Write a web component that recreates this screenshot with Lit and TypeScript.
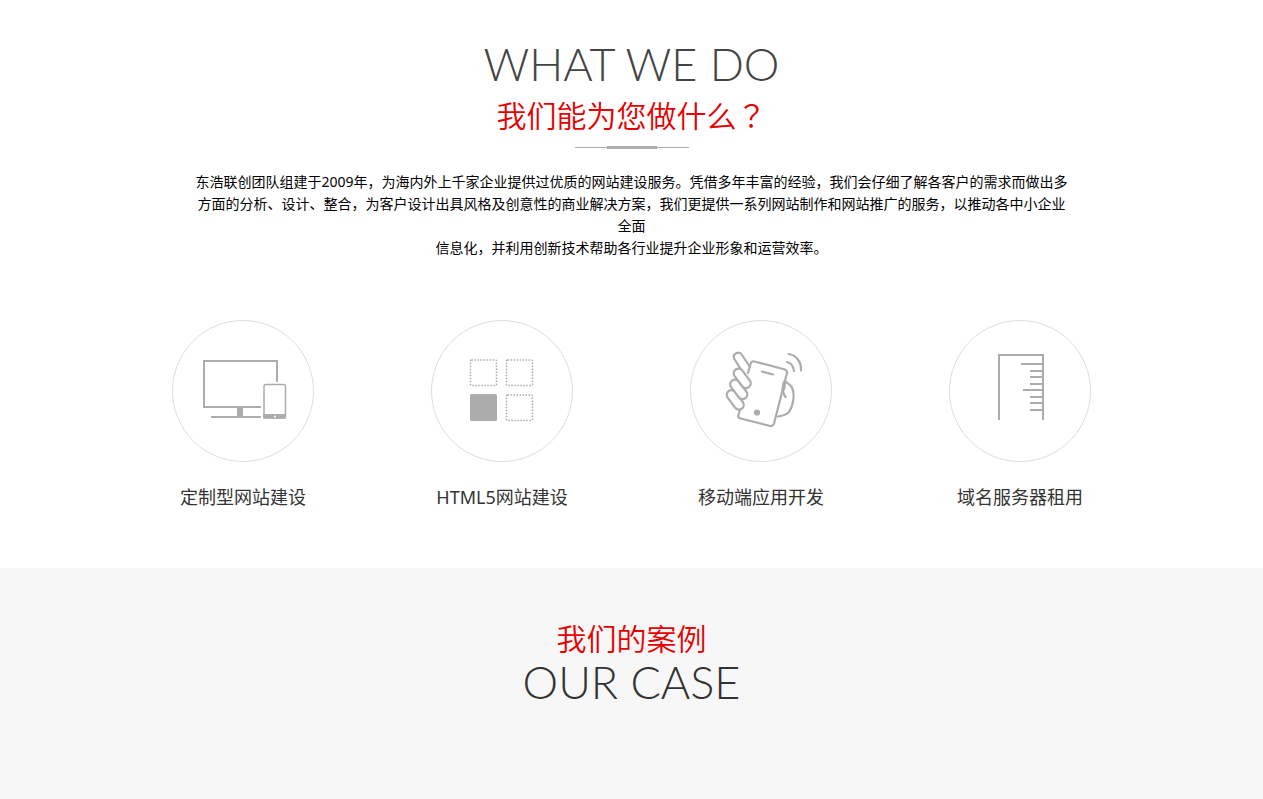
import { LitElement, html, css, svg } from "lit";
import { customElement } from "lit/decorators.js";

const screens = svg`
  <path d="M105 62V41H32V87H89M39 97H89" />
  <path d="M68 87V97" stroke-width="6" />
  <rect x="92" y="64.500" width="21.500" height="33.500" rx="2" stroke-width="1.500" />
  <path d="M92 95H113V97.500H92Z" fill="#acacac" />
  <circle cx="103" cy="96.500" r="1" fill="#fff" stroke="none" />`;

const blocks = svg`
  <g stroke-width="1.500" stroke-dasharray="1.500 1.500">
    <rect x="39.500" y="40" width="26" height="25.500" rx="1" />
    <rect x="75.500" y="40" width="26" height="25.500" rx="1" />
    <rect x="75.500" y="75" width="26" height="25.500" rx="1" />
  </g>
  <rect x="39" y="74" width="27" height="27" rx="1.500" fill="#acacac" stroke="none" />`;

const phone = svg`
  <g stroke-linecap="round" stroke-linejoin="round" stroke-width="2.200">
    <path d="M50.500 88L48.500 94.500Q47.500 97.500 50.500 98.500L80 106Q83 106.500 84 103.500L97 53Q97.500 50.500 95 49.500L64.500 41.500Q61.500 40.500 60.500 44L58 53" />
    <path d="M72 51.500L83 54.500" />
    <circle cx="67" cy="92.500" r="2" fill="#acacac" />
    <path d="M60 47L52 35C49 30.500 42 33.500 44.300 39L52 51" />
    <g fill="#fff">
      <rect x="-4.500" y="-4.500" width="22" height="9.500" rx="4.700" transform="translate(41.500 74.500) rotate(53)" />
      <rect x="-4.500" y="-4.500" width="22" height="9.500" rx="4.700" transform="translate(45 64) rotate(53)" />
      <rect x="-4.500" y="-4.500" width="22" height="9.500" rx="4.700" transform="translate(48.500 53) rotate(53)" />
    </g>
    <path d="M94 63C92 68 92.500 73 95.500 77M95 61L101 66C106 73 103 86 99 92C96 95 91.500 96 88 96.500" />
    <path d="M97 42C101 43 103.500 46.500 104 51M98.500 34C106 35 111.500 41.500 111 50.500" />
    <path d="M94.500 62L93.500 69" stroke-width="3.500" />
  </g>`;

const ruler = svg`
  <path d="M50 100V35H94V100M94 44H72M94 51H81M94 57H81M94 64H81M94 70H74M94 77H81M94 83H81M94 90H81" />`;

const services = [
  { name: "定制型网站建设", icon: screens },
  { name: "HTML5网站建设", icon: blocks },
  { name: "移动端应用开发", icon: phone },
  { name: "域名服务器租用", icon: ruler },
];

@customElement("app-root")
export class AppRoot extends LitElement {
  static styles = css`
    :host {
      display: flex;
      flex-direction: column;
      min-height: 100vh;
      font-family: "Noto Sans", "Noto Sans CJK SC", sans-serif;
      background: #fff;
      color: #000;
      text-align: center;
    }
    h2, h3, p, ul { margin: 0; padding: 0; font-weight: 400; }
    .services { padding: 39px 20px 56px; }
    .latin {
      font: 300 45px/50px Lato, sans-serif;
      color: #444;
    }
    .chinese {
      font-family: "Noto Sans CJK SC", sans-serif;
      font-weight: 350;
      font-size: 30px;
      line-height: 40px;
      color: #e60000;
    }
    .mark { font-family: "Noto Sans CJK JP", sans-serif; }
    .services .chinese { padding-top: 5px; }
    .rule {
      display: flex;
      align-items: center;
      width: 114px;
      height: 3px;
      margin: 12px auto 0;
    }
    .rule::before, .rule::after { content: ""; flex: 1; height: 1px; background: #acacac; }
    .bar { width: 50px; height: 3px; background: #acacac; }
    .intro {
      max-width: 880px;
      margin: 22px auto 0;
      font-size: 14px;
      line-height: 22px;
    }
    .list {
      display: grid;
      grid-template-columns: repeat(4, 1fr);
      max-width: 1036px;
      margin: 61px auto 0;
      list-style: none;
    }
    .item { display: flex; flex-direction: column; align-items: center; gap: 20px; }
    .icon {
      box-sizing: border-box;
      width: 142px;
      height: 142px;
      border: 1px solid #ddd;
      border-radius: 50%;
    }
    .icon svg { display: block; width: 140px; height: 140px; fill: none; stroke: #acacac; stroke-width: 2; }
    .name { font-size: 18px; line-height: 30px; color: #333; }
    .cases { flex: 1; padding: 49px 20px 90px; background: #f7f7f7; }
    .cases .latin { color: #333; }
  `;

  render() {
    return html`
      <section class="services">
        <h2 class="latin">WHAT WE DO</h2>
        <h3 class="chinese">我们能为您做什么<span class="mark" lang="ja">？</span></h3>
        <div class="rule"><span class="bar"></span></div>
        <p class="intro">
          东浩联创团队组建于2009年，为海内外上千家企业提供过优质的网站建设服务。凭借多年丰富的经验，我们会仔细了解各客户的需求而做出多方面的分析、设计、整合，为客户设计出具风格及创意性的商业解决方案，我们更提供一系列网站制作和网站推广的服务，以推动各中小企业全面<br />信息化，并利用创新技术帮助各行业提升企业形象和运营效率。
        </p>
        <ul class="list">
          ${services.map(
            (s) => html`<li class="item">
              <span class="icon"><svg viewBox="1 1 140 140" aria-hidden="true">${s.icon}</svg></span>
              <span class="name">${s.name}</span>
            </li>`
          )}
        </ul>
      </section>
      <section class="cases">
        <h3 class="chinese">我们的案例</h3>
        <h2 class="latin">OUR CASE</h2>
      </section>
    `;
  }
}
